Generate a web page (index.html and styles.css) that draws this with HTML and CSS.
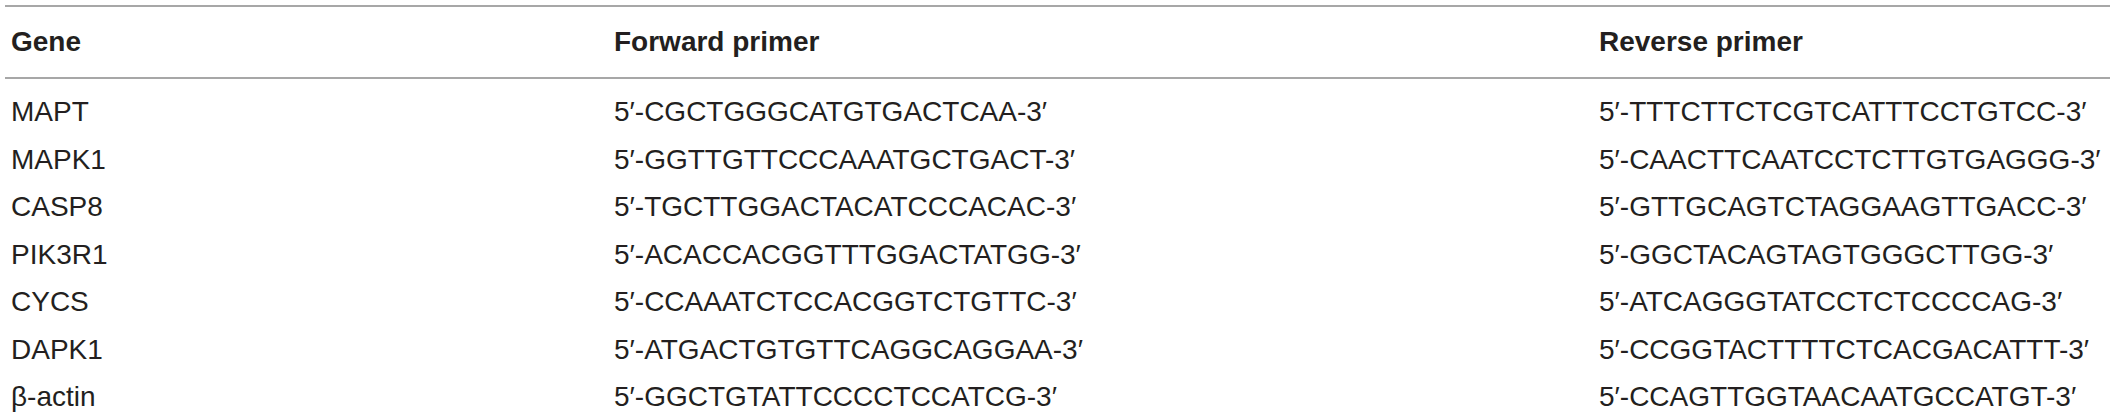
FILE: index.html
```html
<!DOCTYPE html>
<html>
<head>
<meta charset="utf-8">
<link rel="stylesheet" href="styles.css">
</head>
<body>
<table class="primers">
  <colgroup>
    <col class="col-gene">
    <col class="col-fwd">
    <col class="col-rev">
  </colgroup>
  <thead>
    <tr><th>Gene</th><th>Forward primer</th><th>Reverse primer</th></tr>
  </thead>
  <tbody>
    <tr><td>MAPT</td><td>5′-CGCTGGGCATGTGACTCAA-3′</td><td>5′-TTTCTTCTCGTCATTTCCTGTCC-3′</td></tr>
    <tr><td>MAPK1</td><td>5′-GGTTGTTCCCAAATGCTGACT-3′</td><td>5′-CAACTTCAATCCTCTTGTGAGGG-3′</td></tr>
    <tr><td>CASP8</td><td>5′-TGCTTGGACTACATCCCACAC-3′</td><td>5′-GTTGCAGTCTAGGAAGTTGACC-3′</td></tr>
    <tr><td>PIK3R1</td><td>5′-ACACCACGGTTTGGACTATGG-3′</td><td>5′-GGCTACAGTAGTGGGCTTGG-3′</td></tr>
    <tr><td>CYCS</td><td>5′-CCAAATCTCCACGGTCTGTTC-3′</td><td>5′-ATCAGGGTATCCTCTCCCCAG-3′</td></tr>
    <tr><td>DAPK1</td><td>5′-ATGACTGTGTTCAGGCAGGAA-3′</td><td>5′-CCGGTACTTTTCTCACGACATTT-3′</td></tr>
    <tr><td>β-actin</td><td>5′-GGCTGTATTCCCCTCCATCG-3′</td><td>5′-CCAGTTGGTAACAATGCCATGT-3′</td></tr>
  </tbody>
</table>
</body>
</html>
```
FILE: styles.css
```css
html, body {
  margin: 0;
  padding: 0;
  background: #fff;
}
body {
  padding: 5px 7px 0 5px;
  font-family: "Liberation Sans", Arial, sans-serif;
  color: #231f20;
}
.primers {
  width: 2105px;
  border-collapse: collapse;
  table-layout: fixed;
  font-size: 28px;
}
.col-gene { width: 603px; }
.col-fwd { width: 985px; }
.primers th {
  text-align: left;
  font-weight: bold;
  padding: 0 6px;
  height: 70px;
  border-top: 2px solid #a7a7a7;
  border-bottom: 2px solid #a7a7a7;
  vertical-align: middle;
}
.primers td {
  padding: 0 6px;
  height: 47.5px;
  line-height: 47.5px;
  white-space: nowrap;
}
.primers tbody tr:first-child td {
  padding-top: 9px;
}
```
